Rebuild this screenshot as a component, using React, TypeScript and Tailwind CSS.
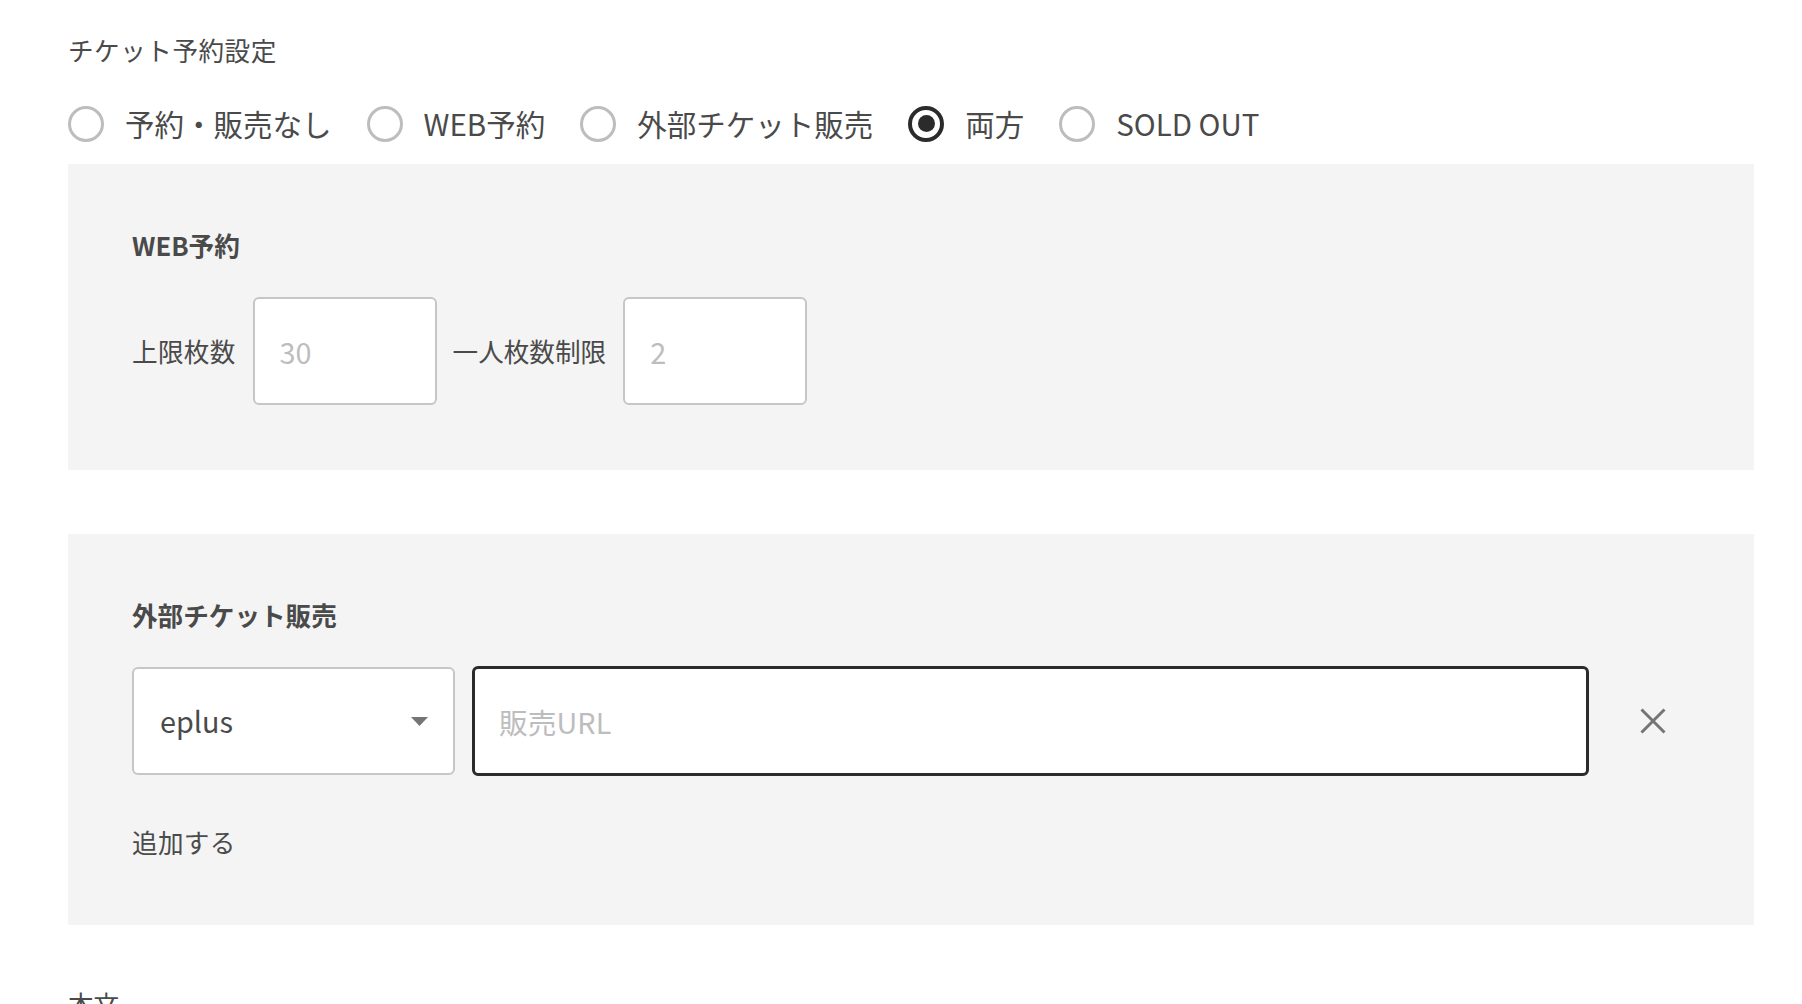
import React from "react";

const options = [
  { label: "予約・販売なし", checked: false },
  { label: "WEB予約", checked: false },
  { label: "外部チケット販売", checked: false },
  { label: "両方", checked: true },
  { label: "SOLD OUT", checked: false },
];

function Radio({ label, checked }: { label: string; checked: boolean }) {
  return (
    <label className="flex items-center mr-[35px]">
      {checked ? (
        <span className="w-[36px] h-[36px] rounded-full border-[4px] border-[#2b2b2b] flex items-center justify-center">
          <span className="w-[17px] h-[17px] rounded-full bg-[#2b2b2b]" />
        </span>
      ) : (
        <span className="w-[36px] h-[36px] rounded-full border-[3px] border-[#bdbdbd]" />
      )}
      <span className="ml-[21px] text-[29.5px] leading-[43px] text-[#4a4a4a]">{label}</span>
    </label>
  );
}

export default function App() {
  return (
    <div className="min-h-screen bg-white pl-[68px] pr-[48px] pt-[31px] font-['Noto_Sans_CJK_JP','Noto_Sans',sans-serif] text-[#4a4a4a]">
      <p className="text-[25.6px] leading-[38px] tracking-[0.5px]">チケット予約設定</p>
      <div className="mt-[33px] flex items-center h-[43px]">
        {options.map((o) => (
          <Radio key={o.label} label={o.label} checked={o.checked} />
        ))}
      </div>

      <section className="mt-[19px] bg-[#f4f4f4] pt-[62px] pb-[65px] px-[64px]">
        <h3 className="text-[25.6px] leading-[38px] font-bold text-[#4a4a4a]">WEB予約</h3>
        <div className="mt-[33px] flex items-center">
          <span className="text-[25.6px] leading-[38px] tracking-[0.3px]">上限枚数</span>
          <input
            className="ml-[17px] w-[184px] h-[108px] bg-white border-2 border-[#c6c6c6] rounded-[6px] px-[25px] text-[28.8px] outline-none placeholder:text-[#bdbdbd]"
            placeholder="30"
          />
          <span className="ml-[16px] text-[25.6px] leading-[38px]">一人枚数制限</span>
          <input
            className="ml-[17px] w-[184px] h-[108px] bg-white border-2 border-[#c6c6c6] rounded-[6px] px-[25px] text-[28.8px] outline-none placeholder:text-[#bdbdbd]"
            placeholder="2"
          />
        </div>
      </section>

      <section className="mt-[64px] bg-[#f4f4f4] pt-[62px] pb-[64px] pl-[64px] pr-[88px]">
        <h3 className="text-[25.6px] leading-[38px] font-bold text-[#4a4a4a]">外部チケット販売</h3>
        <div className="mt-[32px] flex items-center">
          <div className="w-[323px] h-[108px] bg-white border-2 border-[#c6c6c6] rounded-[6px] pl-[26px] pr-[25px] flex items-center justify-between">
            <span className="text-[28.8px] text-[#4a4a4a]">eplus</span>
            <svg width="17" height="9" viewBox="0 0 17 9">
              <path d="M0 0 L17 0 L8.5 9 Z" fill="#757575" />
            </svg>
          </div>
          <input
            className="ml-[17px] flex-1 h-[110px] bg-white border-[3px] border-[#2b2b2b] rounded-[6px] px-[24px] text-[28.8px] outline-none placeholder:text-[#bdbdbd]"
            placeholder="販売URL"
          />
          <button className="ml-[51px] w-[26px] h-[26px] flex items-center justify-center">
            <svg width="26" height="26" viewBox="0 0 26 26">
              <path d="M1.5 1.5 L24.5 24.5 M24.5 1.5 L1.5 24.5" stroke="#757575" strokeWidth="3" />
            </svg>
          </button>
        </div>
        <p className="mt-[47px] text-[25.6px] leading-[38px] tracking-[0.3px]">追加する</p>
      </section>

      <p className="mt-[60px] text-[25.6px] leading-[38px]">本文</p>
    </div>
  );
}
